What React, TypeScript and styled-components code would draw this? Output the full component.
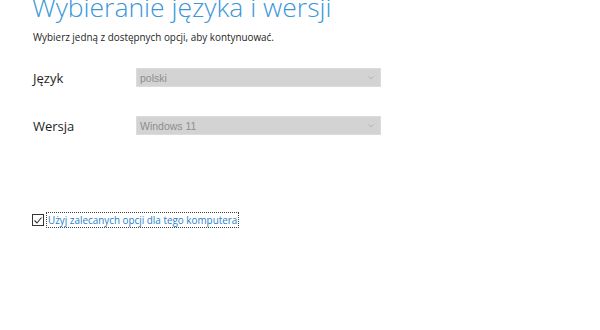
import React from "react";
import styled, { createGlobalStyle } from "styled-components";

const Global = createGlobalStyle`
  html, body {
    margin: 0;
    padding: 0;
    background: #ffffff;
    overflow: hidden;
  }
  body {
    font-family: "Open Sans", "Noto Sans", sans-serif;
    color: #1e1e1e;
  }
`;

const Page = styled.div`
  width: 600px;
  height: 330px;
  padding-left: 33px;
  box-sizing: border-box;
  overflow: hidden;
`;

const Title = styled.h1`
  margin: -13px 0 0 -1px;
  font-family: "Open Sans", sans-serif;
  font-weight: 300;
  font-size: 26.5px;
  line-height: 40px;
  color: #3b97d8;
  white-space: nowrap;
`;

const Subtitle = styled.p`
  margin: 2px 0 0;
  font-size: 9.9px;
  line-height: 16px;
  color: #1e1e1e;
`;

const Form = styled.div`
  display: grid;
  grid-template-columns: 103px 245px;
  row-gap: 29px;
  margin-top: 23px;
  align-items: center;
`;

const Label = styled.label`
  font-size: 13px;
  color: #1e1e1e;
`;

const Select = styled.div`
  position: relative;
  height: 19px;
  box-sizing: border-box;
  background: #d3d3d3;
  border: 1px solid #dcdcdc;
  padding-left: 3px;
  display: flex;
  align-items: center;
  font-family: "Liberation Sans", Arial, sans-serif;
  font-size: 10.5px;
  color: #8e8e8e;
`;

const Arrow = styled.svg`
  position: absolute;
  right: 6px;
  top: 7px;
`;

const CheckRow = styled.div`
  display: flex;
  align-items: center;
  gap: 2px;
  margin-top: 77px;
  margin-left: -1px;
`;

const Box = styled.span`
  width: 12px;
  height: 12px;
  box-sizing: border-box;
  border: 1px solid #333;
  background: #fff;
  display: flex;
  align-items: center;
  justify-content: center;
`;

const LinkText = styled.span`
  font-size: 9.9px;
  line-height: 14px;
  color: #2a7fc9;
  border: 1px dotted #444;
  padding: 0 1px;
`;

const Dropdown = ({ value }: { value: string }) => (
  <Select>
    {value}
    <Arrow width="6" height="4" viewBox="0 0 6 4">
      <path d="M0.5 0.5 L3 3 L5.5 0.5" fill="none" stroke="#b4b4b4" strokeWidth="1" />
    </Arrow>
  </Select>
);

export default function App() {
  return (
    <Page>
      <Global />
      <Title>Wybieranie języka i wersji</Title>
      <Subtitle>Wybierz jedną z dostępnych opcji, aby kontynuować.</Subtitle>
      <Form>
        <Label>Język</Label>
        <Dropdown value="polski" />
        <Label>Wersja</Label>
        <Dropdown value="Windows 11" />
      </Form>
      <CheckRow>
        <Box>
          <svg width="10" height="9" viewBox="0 0 10 9">
            <path d="M1.5 4.5 L4 7 L8.5 1.5" fill="none" stroke="#333" strokeWidth="1.1" />
          </svg>
        </Box>
        <LinkText>Użyj zalecanych opcji dla tego komputera</LinkText>
      </CheckRow>
    </Page>
  );
}
